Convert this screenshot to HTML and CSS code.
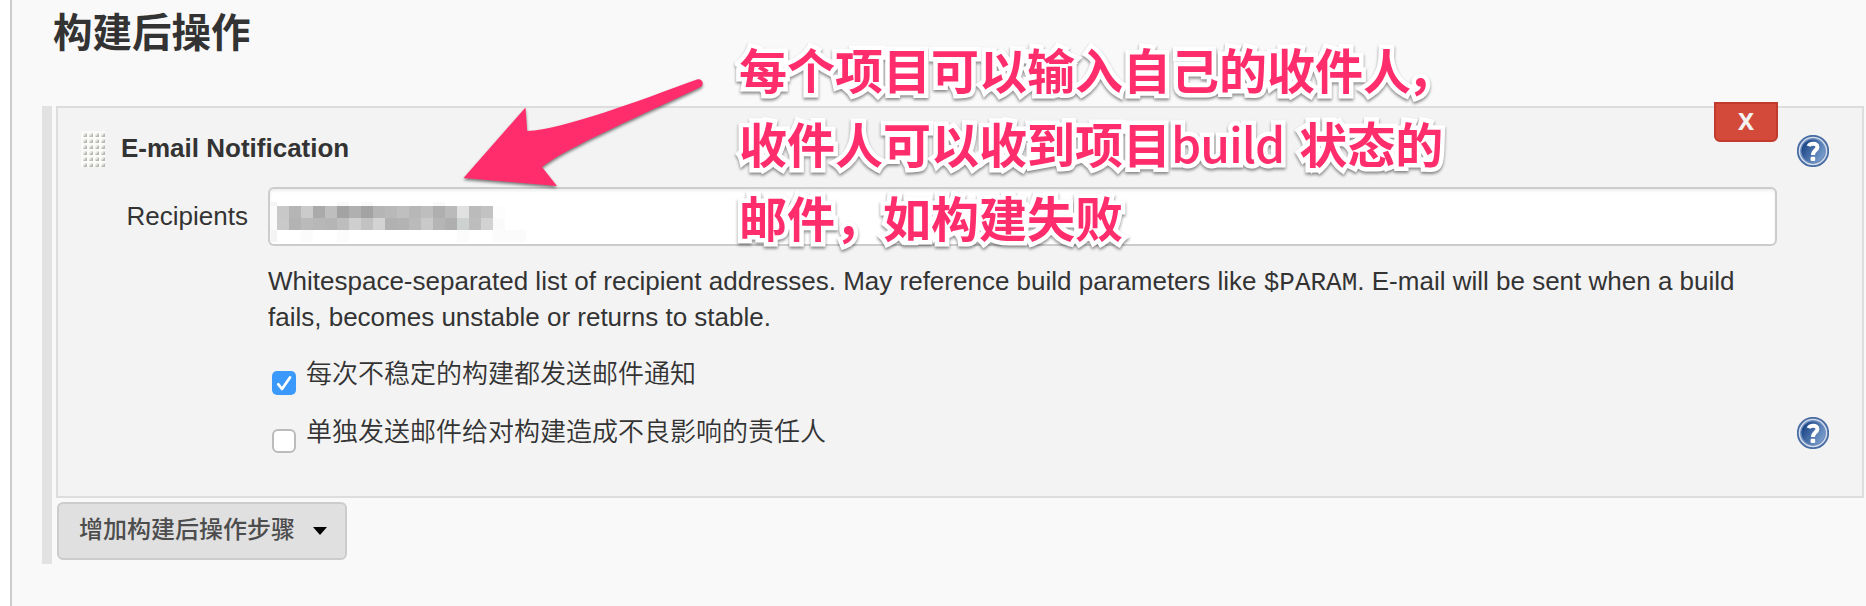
FILE: index.html
```html
<!DOCTYPE html>
<html lang="zh-CN">
<head>
<meta charset="utf-8">
<title>构建后操作</title>
<link rel="stylesheet" href="styles.css">
</head>
<body>
<svg class="defs" width="0" height="0" aria-hidden="true">
  <defs>
    <linearGradient id="blue" x1="0" y1="0.2" x2="1" y2="0.8">
      <stop offset="0.1" stop-color="#1d4788"/>
      <stop offset="1" stop-color="#82a6d4"/>
    </linearGradient>
    <pattern id="dots" width="6" height="6" patternUnits="userSpaceOnUse">
      <rect width="6" height="6" fill="#fbfbf9"/>
      <path d="M6 2v4H2z" fill="#b9b9b3"/>
      <path d="M6 2L2 6V4L4 2z" fill="#e2e2de"/>
    </pattern>
    <symbol id="help" viewBox="0 0 32 32">
      <circle cx="16" cy="16" r="15.2" fill="#d5dfed" stroke="#4a6da3" stroke-width="1.8"/>
      <circle cx="16" cy="16" r="12.2" fill="url(#blue)" stroke="#6e8fbe" stroke-width="1.4"/>
      <path d="M11.6 11.2C12.6 8.2 20.6 7.2 20.4 12.2C20.3 15.6 16 15 16 20" fill="none" stroke="#fff" stroke-width="4"/>
      <rect x="13.6" y="21.8" width="4.6" height="4.2" rx="1" fill="#fff"/>
    </symbol>
  </defs>
</svg>
<main class="page">
  <h1 class="heading">构建后操作</h1>
  <div class="group">
    <section class="panel">
      <button class="remove">X</button>
      <header class="panel-head">
        <svg class="grip" width="24" height="36"><rect width="24" height="36" fill="url(#dots)"/></svg>
        <b class="title">E-mail Notification</b>
        <svg class="help"><use href="#help"/></svg>
      </header>
      <div class="row">
        <label class="label">Recipients</label>
        <div class="input">
          <svg class="mosaic" width="260" height="42" shape-rendering="crispEdges">
            <g fill="#f4f4f4"><rect x="1" y="0" width="6" height="4"/><rect x="1" y="4" width="6" height="24" fill="#fafafa"/><rect x="1" y="28" width="6" height="12"/><rect x="67" width="12" height="4" fill="#f9f9f9"/><rect x="91" width="12" height="4" fill="#f9f9f9"/><rect x="163" width="12" height="4" fill="#f9f9f9"/></g>
            <g transform="translate(7 4)">
              <rect x="0" width="12" height="12" fill="#c8c8c8"/><rect x="12" width="12" height="12" fill="#b5b5b5"/><rect x="24" width="12" height="12" fill="#cbcbcb"/><rect x="36" width="12" height="12" fill="#aaa"/><rect x="48" width="12" height="12" fill="#bebebe"/><rect x="60" width="12" height="12" fill="#a3a3a3"/><rect x="72" width="12" height="12" fill="#b0b0b0"/><rect x="84" width="12" height="12" fill="#a3a3a3"/><rect x="96" width="12" height="12" fill="#b5b5b5"/><rect x="108" width="12" height="12" fill="#b9b9b9"/><rect x="120" width="12" height="12" fill="#bfbfbf"/><rect x="132" width="12" height="12" fill="#b7b7b7"/><rect x="144" width="12" height="12" fill="#bebebe"/><rect x="156" width="12" height="12" fill="#afafaf"/><rect x="168" width="12" height="12" fill="#bababa"/><rect x="180" width="12" height="12" fill="#e1e1e1"/><rect x="192" width="12" height="12" fill="#bbb"/><rect x="204" width="12" height="12" fill="#c2c2c2"/><rect x="216" width="12" height="12" fill="#fdfdfd"/>
            </g>
            <g transform="translate(7 16)">
              <rect x="0" width="12" height="12" fill="#c9c9c9"/><rect x="12" width="12" height="12" fill="#b3b3b3"/><rect x="24" width="12" height="12" fill="#bababa"/><rect x="36" width="12" height="12" fill="#b7b7b7"/><rect x="48" width="12" height="12" fill="#b5b5b5"/><rect x="60" width="12" height="12" fill="#bdbdbd"/><rect x="72" width="12" height="12" fill="#cfcfcf"/><rect x="84" width="12" height="12" fill="#c2c2c2"/><rect x="96" width="12" height="12" fill="#d3d3d3"/><rect x="108" width="12" height="12" fill="#b1b1b1"/><rect x="120" width="12" height="12" fill="#b3b3b3"/><rect x="132" width="12" height="12" fill="#bababa"/><rect x="144" width="12" height="12" fill="#c9c9c9"/><rect x="156" width="12" height="12" fill="#b5b5b5"/><rect x="168" width="12" height="12" fill="#afafaf"/><rect x="180" width="12" height="12" fill="#cdd1d0"/><rect x="192" width="12" height="12" fill="#bdbdbd"/><rect x="204" width="12" height="12" fill="#d2d2d2"/><rect x="216" width="12" height="12" fill="#fafafa"/>
            </g>
            <g fill="#fbfbfb"><rect x="31" y="28" width="12" height="12"/><rect x="67" y="28" width="12" height="12"/><rect x="187" y="28" width="12" height="12"/><rect x="223" y="28" width="33" height="12"/></g>
          </svg>
        </div>
      </div>
      <p class="desc">Whitespace-separated list of recipient addresses. May reference build parameters like <code>$PARAM</code>. E-mail will be sent when a build fails, becomes unstable or returns to stable.</p>
      <div class="option">
        <svg class="check" width="24" height="24" viewBox="0 0 24 24"><rect width="24" height="24" rx="5" fill="#3b99fc"/><path d="M6.2 13.2L10 18L18 6.4" fill="none" stroke="#fff" stroke-width="2.7" stroke-linecap="round" stroke-linejoin="round"/></svg>
        <span class="option-text">每次不稳定的构建都发送邮件通知</span>
      </div>
      <div class="option">
        <span class="check empty"></span>
        <span class="option-text">单独发送邮件给对构建造成不良影响的责任人</span>
        <svg class="help"><use href="#help"/></svg>
      </div>
    </section>
    <button class="add">增加构建后操作步骤<svg class="caret" width="14" height="8"><path d="M0 0H14L7 8z"/></svg></button>
  </div>
</main>
<svg class="arrow" width="260" height="140" viewBox="450 60 260 140">
  <path d="M463.5 178L525.5 107.5L527.2 131C564 129 638 101 697 79.4C702 78 705 84 700.5 87C647 113 569 146 542 167L557 186z" fill="#ff2d6c"/>
</svg>
<p class="note">每个项目可以输入自己的收件人<span class="comma">，</span><br>收件人可以收到项目<span class="latin">build</span> 状态的<br>邮件，如构建失败</p>
</body>
</html>
```
FILE: styles.css
```css
* { box-sizing: border-box; }
body {
  margin: 0;
  height: 606px;
  overflow: hidden;
  position: relative;
  background: #fff;
  color: #333;
  font: 26px/36px "Liberation Sans", "Noto Sans CJK SC", sans-serif;
}
.defs { position: absolute; }
.page {
  height: 606px;
  margin-left: 10px;
  padding: 0 2px 0 30px;
  border-left: 2px solid #ccc;
  background: #f9f9f9;
}
.heading {
  margin: 0 0 46px 11px;
  font: 700 39.5px/60px "Noto Sans CJK SC", sans-serif;
}
.group {
  height: 458px;
  padding-left: 4px;
  border-left: 10px solid #e2e2e2;
}
.panel {
  position: relative;
  height: 392px;
  margin-bottom: 4px;
  padding: 23px 33px 0 23px;
  border: 2px solid #ddd;
  background: #f3f3f3;
}
.remove {
  position: absolute;
  top: -6px;
  right: 84px;
  width: 64px;
  height: 40px;
  padding: 0 0 2px;
  border: 2px solid #c23a2b;
  border-radius: 0 0 6px 6px;
  background: #d34a3a;
  color: #f3f3f3;
  font: 700 24px/34px "Noto Sans", sans-serif;
}
.panel-head {
  display: flex;
  height: 56px;
}
.title {
  margin: -1px 0 0 16px;
}
.help {
  width: 32px;
  height: 32px;
  flex: none;
  margin: 4px 0 0 auto;
}
.row {
  display: flex;
  justify-content: flex-end;
  padding-right: 52px;
}
.label {
  padding: 11px 20px 0 0;
}
.input {
  width: 1509px;
  height: 59px;
  padding: 13px 0 0;
  border: 2px solid #ccc;
  border-radius: 6px;
  background: #fff;
  box-shadow: inset 0 2px 3px #eee;
}
.mosaic { display: block; }
.desc {
  width: 1510px;
  margin: 17px 0 20px 187px;
}
.desc code { font: 26px/30px "Liberation Mono", monospace; }
.option {
  display: flex;
  height: 58px;
  margin-left: 191px;
}
.check {
  flex: none;
  width: 24px;
  height: 24px;
  margin-top: 16px;
}
.empty {
  border: 2px solid #bbb;
  border-radius: 6px;
  background: #fff;
}
.option-text {
  margin: -1px 0 0 10px;
  font: 350 26px/36px "Noto Sans CJK SC", sans-serif;
}
.add {
  display: flex;
  align-items: center;
  width: 290px;
  height: 58px;
  margin-left: 1px;
  padding: 0 18px 6px 20px;
  border: 2px solid #ccc;
  border-radius: 6px;
  background: #e0e0e0;
  color: #4d4d4d;
  font: 500 24px/36px "Noto Sans CJK SC", sans-serif;
}
.caret { margin: 6px 0 0 18px; }
.arrow {
  position: absolute;
  left: 450px;
  top: 60px;
  filter: drop-shadow(0 2px 1.5px rgba(0, 0, 0, .5));
}
.note {
  position: absolute;
  left: 739px;
  top: 31px;
  margin: 0;
  white-space: nowrap;
  color: #ff2d6c;
  font: 700 48px/74px "Noto Sans CJK SC", sans-serif;
  -webkit-text-stroke: 9px #fff;
  paint-order: stroke fill;
  stroke-linejoin: round;
  filter: drop-shadow(0 2px 1.5px rgba(0, 0, 0, .45));
}
.comma { margin-left: -4px; }
.latin {
  margin-right: 4px;
  font-weight: 500;
  letter-spacing: -1px;
}
```
